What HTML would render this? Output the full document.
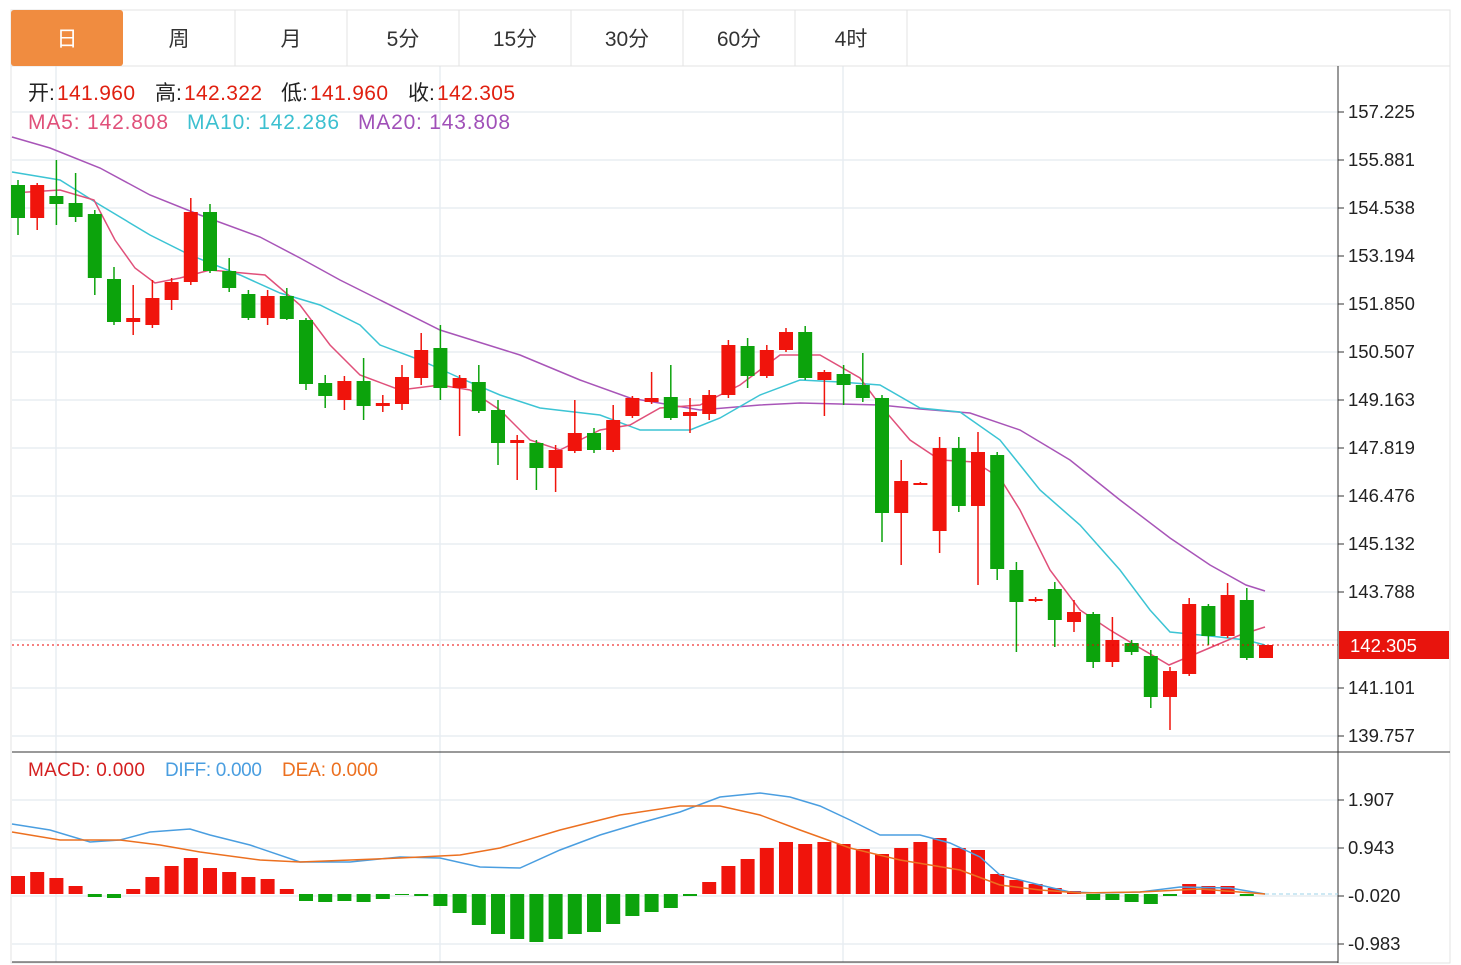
<!DOCTYPE html>
<html><head><meta charset="utf-8"><style>
body{margin:0;background:#fff;width:1461px;height:965px;overflow:hidden;font-family:"Liberation Sans","Noto Sans CJK SC",sans-serif}
svg{position:absolute;left:0;top:0}
</style></head><body>
<svg id="s" width="1461" height="965" xmlns="http://www.w3.org/2000/svg" font-family="Liberation Sans, Noto Sans CJK SC, sans-serif">
<rect x="11" y="10" width="1439" height="953" fill="#fff" stroke="#e3e3e3"/>
<g id="grid"></g>
<line x1="11" y1="66" x2="1450" y2="66" stroke="#e3e3e3"/>
<rect x="11" y="10" width="112" height="56" rx="3" fill="#f08c40"/>
<g stroke="#e3e3e3"><line x1="235" y1="10" x2="235" y2="66"/><line x1="347" y1="10" x2="347" y2="66"/><line x1="459" y1="10" x2="459" y2="66"/><line x1="571" y1="10" x2="571" y2="66"/><line x1="683" y1="10" x2="683" y2="66"/><line x1="795" y1="10" x2="795" y2="66"/><line x1="907" y1="10" x2="907" y2="66"/></g>
<g font-size="21" text-anchor="middle" fill="#333">
<text x="67" y="46" fill="#fff">日</text><text x="179" y="46">周</text><text x="291" y="46">月</text><text x="403" y="46">5分</text><text x="515" y="46">15分</text><text x="627" y="46">30分</text><text x="739" y="46">60分</text><text x="851" y="46">4时</text>
</g>
<g id="ma"></g>
<g id="c"></g>
<g id="m"></g>
<line x1="12" y1="645" x2="1338" y2="645" stroke="#e00" stroke-dasharray="2,3"/>
<line x1="1338" y1="66" x2="1338" y2="963" stroke="#333"/>
<line x1="12" y1="752" x2="1450" y2="752" stroke="#333"/>
<line x1="12" y1="962" x2="1338" y2="962" stroke="#333"/>
<line x1="1265" y1="894" x2="1338" y2="894" stroke="#9cd3ea" stroke-dasharray="4,3"/>
<g id="ax" font-size="18.5" fill="#222"></g>
<rect x="1339" y="631" width="110" height="28" fill="#e8140d"/>
<text x="1350" y="652" font-size="18.5" fill="#fff">142.305</text>
<g font-size="21">
<text y="100" fill="#222"><tspan x="28">开:</tspan><tspan x="57" fill="#e02010" textLength="78">141.960</tspan><tspan x="155">高:</tspan><tspan x="184" fill="#e02010" textLength="78">142.322</tspan><tspan x="281">低:</tspan><tspan x="310" fill="#e02010" textLength="78">141.960</tspan><tspan x="408">收:</tspan><tspan x="437" fill="#e02010" textLength="78">142.305</tspan></text>
<text y="129"><tspan x="28" fill="#e0507a" textLength="140">MA5: 142.808</tspan><tspan x="187" fill="#3cc0d0" textLength="152">MA10: 142.286</tspan><tspan x="358" fill="#a050b8" textLength="152">MA20: 143.808</tspan></text>
</g>
<text y="776" font-size="19"><tspan x="28" fill="#d42020" textLength="117">MACD: 0.000</tspan><tspan x="165" fill="#4a9ee0" textLength="97">DIFF: 0.000</tspan><tspan x="282" fill="#ec7020" textLength="96">DEA: 0.000</tspan></text>
</svg>
<script>
const NS="http://www.w3.org/2000/svg";
function el(p,t,a){const e=document.createElementNS(NS,t);for(const k in a)e.setAttribute(k,a[k]);document.getElementById(p).appendChild(e);return e;}
const ys=[112,160,208,256,304,352,400,448,496,544,592,640,688,736],lab=["157.225","155.881","154.538","153.194","151.850","150.507","149.163","147.819","146.476","145.132","143.788","142.4","141.101","139.757"];
ys.forEach((y,i)=>{el("grid","line",{x1:12,y1:y,x2:1338,y2:y,stroke:"#e8edf2","stroke-width":1.5});if(i!=11){el("ax","line",{x1:1338,y1:y,x2:1344,y2:y,stroke:"#333"});el("ax","text",{x:1348,y:y+6}).textContent=lab[i];}});
const my=[800,848,896,944],ml=["1.907","0.943","-0.020","-0.983"];
my.forEach((y,i)=>{el("grid","line",{x1:12,y1:y,x2:1338,y2:y,stroke:"#e8edf2","stroke-width":1.5});el("ax","line",{x1:1338,y1:y,x2:1344,y2:y,stroke:"#333"});el("ax","text",{x:1348,y:y+6}).textContent=ml[i];});
[56,440,843].forEach(x=>el("grid","line",{x1:x,y1:66,x2:x,y2:962,stroke:"#e8edf2","stroke-width":1.5}));
const C=[[185,218,180,235,0],[185,218,183,230,1],[196,204,160,225,0],[203,217,173,222,0],[214,278,210,295,0],[279,322,267,325,0],[318,322,285,335,1],[298,325,280,328,1],[282,300,278,310,1],[212,282,198,285,1],[212,271,204,273,0],[271,288,258,292,0],[294,318,290,320,0],[296,318,290,325,1],[296,319,288,320,0],[320,384,318,390,0],[383,396,375,408,0],[381,400,376,410,1],[381,406,358,420,0],[403,406,395,412,1],[377,404,365,410,1],[350,378,333,385,1],[348,388,325,400,0],[378,388,375,436,1],[382,411,365,413,0],[410,443,400,465,0],[440,443,435,480,1],[443,468,440,490,0],[450,468,445,492,1],[433,451,400,453,1],[433,450,428,453,0],[420,450,405,452,1],[398,416,396,418,1],[398,402,372,404,1],[397,418,365,420,0],[412,416,398,433,1],[395,414,390,420,1],[345,395,340,398,1],[346,376,338,388,0],[350,376,345,378,1],[332,350,328,352,1],[332,378,326,380,0],[372,380,370,416,1],[374,385,365,405,0],[385,398,353,402,0],[398,513,395,542,0],[481,513,460,565,1],[483,485,482,485,1],[448,531,437,553,1],[448,506,437,512,0],[452,506,432,585,1],[455,569,452,580,0],[570,602,562,652,0],[599,601,597,602,1],[589,620,582,647,0],[612,622,600,632,1],[614,662,612,668,0],[640,662,617,667,1],[643,652,640,655,0],[656,697,650,708,0],[671,697,667,730,1],[604,674,598,676,1],[606,636,604,645,0],[595,636,583,638,1],[600,658,588,660,0],[645,658,645,658,1]];
C.forEach((c,i)=>{const x=18+19.2*i,col=c[4]?"#f0140c":"#0ca30c";el("c","line",{x1:x,y1:c[2],x2:x,y2:c[3],stroke:col,"stroke-width":1.5});el("c","rect",{x:x-7,y:c[0],width:14,height:Math.max(2,c[1]-c[0]),fill:col});});
function pl(p,pts,col){el(p,"polyline",{points:pts,fill:"none",stroke:col,"stroke-width":1.5});}
pl("ma","12,137 50,148 100,168 150,195 200,215 260,237 300,258 340,280 380,300 440,330 520,355 580,380 630,398 700,410 760,405 800,403 840,404 880,405 920,409 970,413 1020,430 1070,460 1120,500 1170,538 1210,565 1246,585 1265,591","#a855b8");
pl("ma","12,172 60,180 100,205 150,235 190,255 240,275 280,293 320,305 360,325 380,345 420,360 460,378 500,395 540,408 600,415 640,430 690,430 720,418 760,395 800,380 840,382 880,385 920,408 960,412 1000,440 1040,490 1080,525 1120,570 1150,610 1170,632 1210,636 1246,640 1265,645","#3cc4d4");
pl("ma","12,193 60,190 94,200 115,240 135,268 155,283 180,278 210,270 265,275 300,305 330,345 360,375 400,390 440,385 470,390 500,410 530,440 560,450 600,430 630,425 660,408 700,405 740,385 780,355 820,355 860,378 880,405 910,440 940,460 975,462 1000,478 1020,510 1050,570 1080,610 1110,630 1140,648 1169,665 1200,652 1240,635 1265,627","#e0507a");
const B=[18,22,16,8,-3,-4,5,17,28,36,26,22,17,15,5,-7,-8,-7,-8,-5,-1,-2,-12,-19,-31,-40,-45,-48,-45,-40,-38,-30,-22,-18,-14,-2,12,28,35,46,52,50,52,50,45,40,46,52,56,46,44,20,14,10,6,3,-6,-6,-8,-10,-2,10,8,8,-2,0];
B.forEach((h,i)=>{const x=18+19.2*i;if(h==0)return;el("m","rect",{x:x-7,y:h>0?894-h:894,width:14,height:Math.abs(h),fill:h>0?"#f0140c":"#0ca30c"});});
pl("m","12,824 50,830 90,842 120,840 150,832 190,829 210,835 250,845 300,862 350,862 400,857 440,858 480,867 520,868 560,850 600,835 640,823 680,812 720,797 760,793 790,797 820,806 850,820 880,835 920,835 950,843 980,857 1000,875 1040,885 1070,892 1100,893 1140,892 1180,887 1230,888 1265,894","#4a9ee0");
pl("m","12,832 60,840 120,840 160,845 200,852 260,860 300,862 400,858 460,855 500,848 560,830 620,815 680,806 720,806 760,815 800,830 850,848 900,860 960,870 1000,885 1040,890 1080,893 1140,892 1200,889 1265,894","#ec7020");
</script>
</body></html>
